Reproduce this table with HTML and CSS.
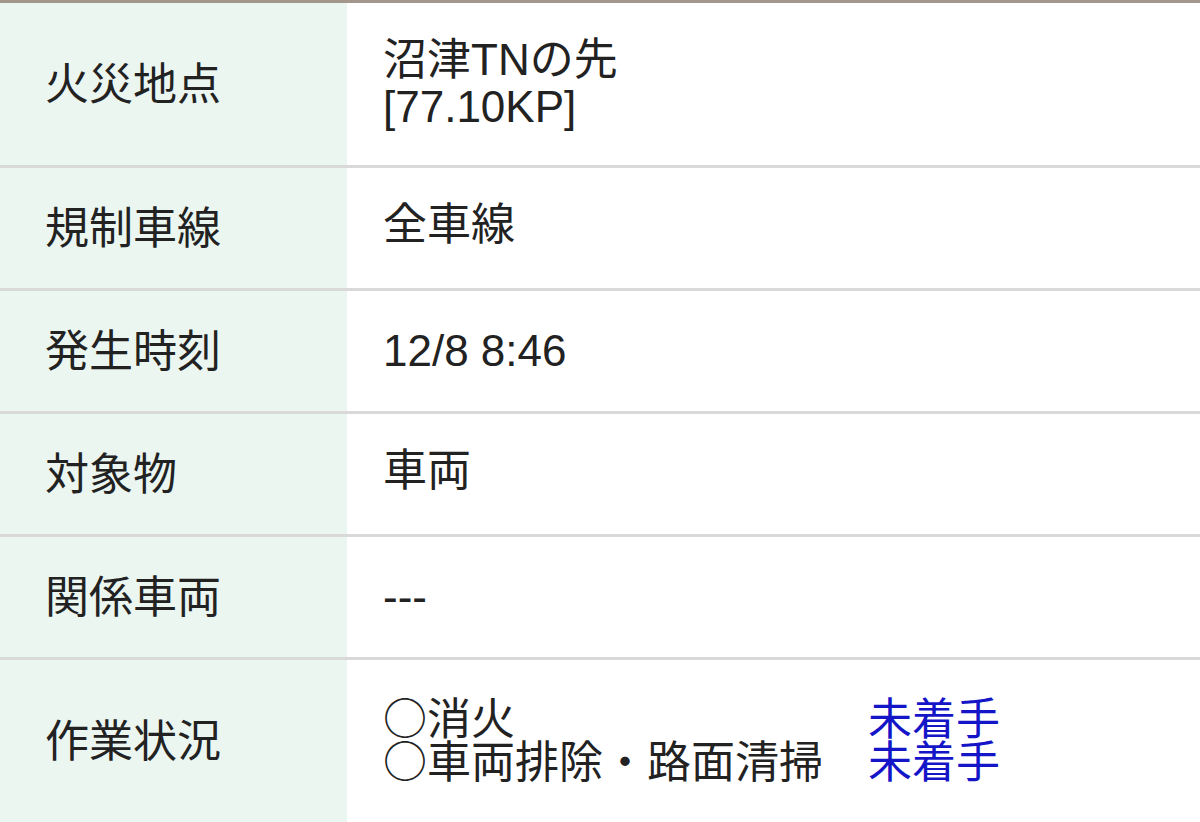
FILE: index.html
```html
<!DOCTYPE html>
<html lang="ja">
<head>
<meta charset="utf-8">
<title>火災情報</title>
<link rel="stylesheet" href="styles.css">
</head>
<body>
<div class="info">
  <div class="row tall">
    <div class="label">火災地点</div>
    <div class="value"><div class="lines loose"><div>沼津TNの先</div><div>[77.10KP]</div></div></div>
  </div>
  <div class="row">
    <div class="label">規制車線</div>
    <div class="value cjk">全車線</div>
  </div>
  <div class="row">
    <div class="label">発生時刻</div>
    <div class="value">12/8 8:46</div>
  </div>
  <div class="row">
    <div class="label">対象物</div>
    <div class="value cjk">車両</div>
  </div>
  <div class="row">
    <div class="label">関係車両</div>
    <div class="value">---</div>
  </div>
  <div class="row tall">
    <div class="label">作業状況</div>
    <div class="value cjk">
      <div class="tasks">
        <div class="task"><span class="mark">○</span>消火</div>
        <div class="status">未着手</div>
        <div class="task"><span class="mark">○</span>車両排除・路面清掃</div>
        <div class="status">未着手</div>
      </div>
    </div>
  </div>
</div>
</body>
</html>
```

FILE: styles.css
```css
html, body {
  margin: 0;
  padding: 0;
  background: #ffffff;
}

body {
  font-family: "Liberation Sans", "Noto Sans CJK JP", sans-serif;
  font-size: 44px;
  color: #222222;
}

.info {
  border-top: 3px solid #a3978c;
}

.row {
  display: grid;
  grid-template-columns: 347px 1fr;
  height: 120px;
  border-bottom: 3px solid #d9d9d9;
}

.row.tall {
  height: 162px;
}

.label {
  background: #ebf6f1;
  display: flex;
  align-items: center;
  padding-left: 45px;
  padding-bottom: 6px;
  font-family: "Noto Sans CJK JP", sans-serif;
}

.value {
  display: flex;
  align-items: center;
  padding-left: 36px;
  line-height: 48px;
}

.value.cjk {
  padding-bottom: 6px;
}

.lines.loose {
  line-height: 47px;
  padding-bottom: 2px;
}

.tasks {
  display: grid;
  grid-template-columns: 485px auto;
  line-height: 43px;
  font-family: "Noto Sans CJK JP", sans-serif;
}

.mark {
  font-family: "Noto Sans CJK JP", sans-serif;
}

.status {
  color: #1515c8;
}
```
